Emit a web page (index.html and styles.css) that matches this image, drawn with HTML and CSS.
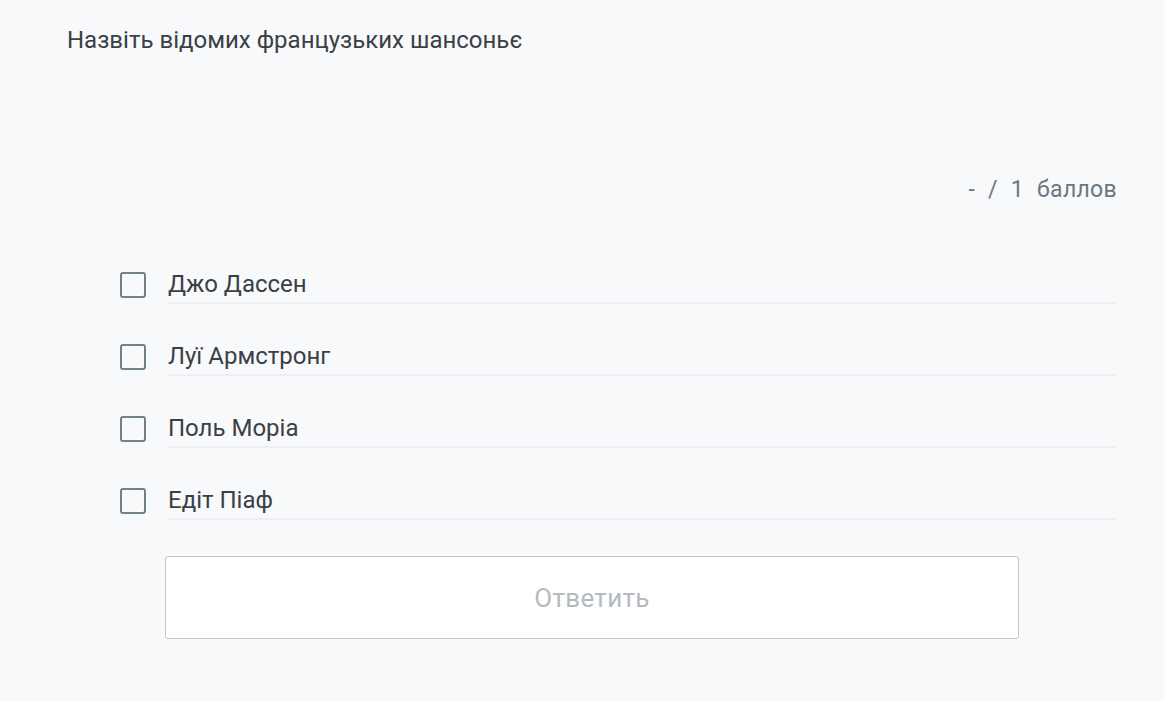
FILE: index.html
```html
<!DOCTYPE html>
<html lang="uk">
<head>
<meta charset="utf-8">
<link rel="stylesheet" href="styles.css">
</head>
<body>
<div class="task">
  <div class="question">Назвіть відомих французьких шансоньє</div>
  <div class="score"><span>-</span><span>/</span><span>1</span><span>баллов</span></div>
  <ul class="options">
    <li class="option"><span class="box"></span><span class="label">Джо Дассен</span></li>
    <li class="option"><span class="box"></span><span class="label">Луї Армстронг</span></li>
    <li class="option"><span class="box"></span><span class="label">Поль Моріа</span></li>
    <li class="option"><span class="box"></span><span class="label">Едіт Піаф</span></li>
  </ul>
  <div class="actions"><button class="answer">Ответить</button></div>
</div>
</body>
</html>
```
FILE: styles.css
```css
html, body {
  margin: 0;
  padding: 0;
  background: #f8f9fb;
  font-family: Roboto, "Noto Sans", sans-serif;
}
.task {
  padding: 26px 47px 0 67px;
  height: 701px;
  box-sizing: border-box;
}
.question {
  font-size: 24px;
  line-height: 28px;
  color: #3a4045;
}
.score {
  margin-top: 122px;
  display: flex;
  justify-content: flex-end;
  gap: 13px;
  font-size: 23px;
  line-height: 28px;
  color: #6b7680;
  letter-spacing: 0.3px;
}
.options {
  list-style: none;
  margin: 28px 0 0 53px;
  padding: 0;
}
.option {
  display: flex;
  align-items: flex-end;
  height: 72px;
}
.box {
  width: 22px;
  height: 22px;
  border: 2.5px solid #718089;
  border-radius: 3px;
  flex: none;
  margin: 0 22px 6px 0;
}
.label {
  flex: 1;
  height: 38px;
  line-height: 37px;
  box-sizing: border-box;
  border-bottom: 2px solid #eceef1;
  font-size: 24px;
  color: #3a4045;
}
.actions {
  margin: 36px 98px 0 98px;
}
.answer {
  display: block;
  width: 100%;
  height: 83px;
  background: #fff;
  border: 1.5px solid #c2c6ca;
  border-radius: 3px;
  font-family: Roboto, "Noto Sans", sans-serif;
  font-size: 26px;
  color: #b3bbc1;
  letter-spacing: 0.3px;
}
```
